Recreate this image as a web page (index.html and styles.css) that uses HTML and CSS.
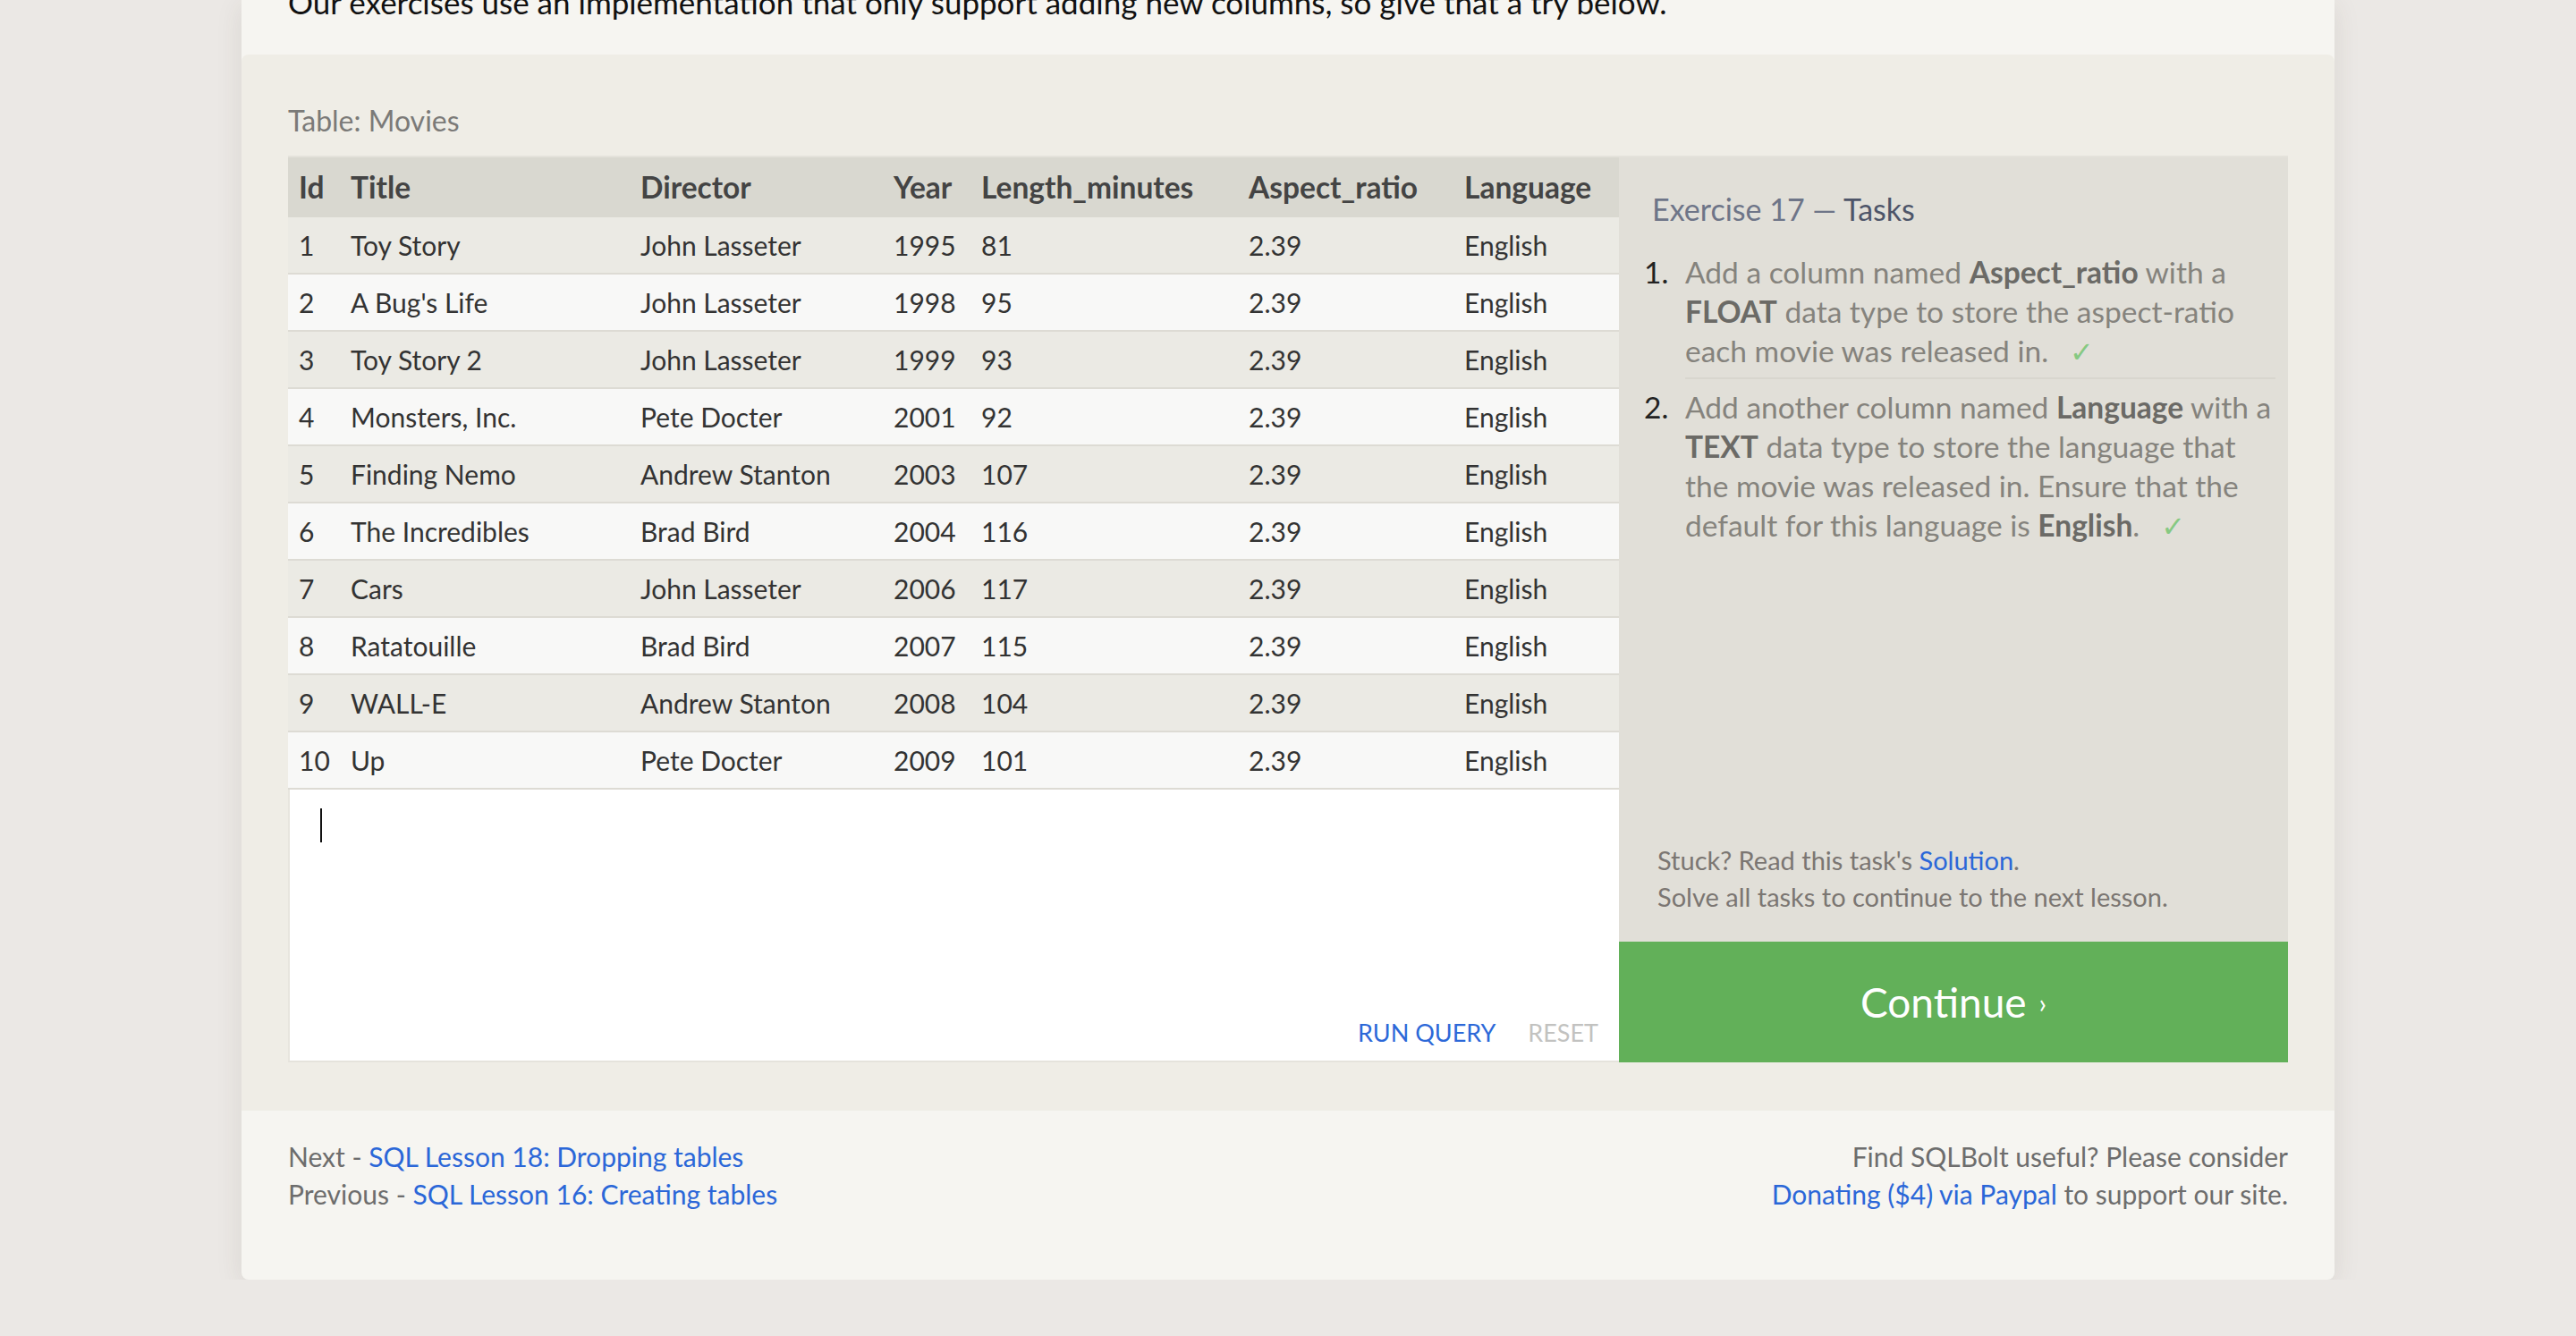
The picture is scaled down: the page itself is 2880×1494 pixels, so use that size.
FILE: index.html
```html
<!DOCTYPE html>
<html lang="en">
<head>
<meta charset="utf-8">
<title>SQLBolt - Lesson 17: Altering tables</title>
<link rel="stylesheet" href="styles.css">
</head>
<body>
<div class="card">
  <div class="intro">
    <p>Our exercises use an implementation that only support adding new columns, so give that a try below.</p>
  </div>
  <section class="exercise">
    <div class="table-label">Table: Movies</div>
    <div class="widget">
      <div class="work">
        <table class="movies">
          <colgroup>
            <col class="c-id"><col class="c-title"><col class="c-director"><col class="c-year"><col class="c-length"><col class="c-aspect"><col class="c-lang">
          </colgroup>
          <thead>
            <tr><th>Id</th><th>Title</th><th>Director</th><th>Year</th><th>Length_minutes</th><th>Aspect_ratio</th><th>Language</th></tr>
          </thead>
          <tbody>
            <tr><td>1</td><td>Toy Story</td><td>John Lasseter</td><td>1995</td><td>81</td><td>2.39</td><td>English</td></tr>
            <tr><td>2</td><td>A Bug's Life</td><td>John Lasseter</td><td>1998</td><td>95</td><td>2.39</td><td>English</td></tr>
            <tr><td>3</td><td>Toy Story 2</td><td>John Lasseter</td><td>1999</td><td>93</td><td>2.39</td><td>English</td></tr>
            <tr><td>4</td><td>Monsters, Inc.</td><td>Pete Docter</td><td>2001</td><td>92</td><td>2.39</td><td>English</td></tr>
            <tr><td>5</td><td>Finding Nemo</td><td>Andrew Stanton</td><td>2003</td><td>107</td><td>2.39</td><td>English</td></tr>
            <tr><td>6</td><td>The Incredibles</td><td>Brad Bird</td><td>2004</td><td>116</td><td>2.39</td><td>English</td></tr>
            <tr><td>7</td><td>Cars</td><td>John Lasseter</td><td>2006</td><td>117</td><td>2.39</td><td>English</td></tr>
            <tr><td>8</td><td>Ratatouille</td><td>Brad Bird</td><td>2007</td><td>115</td><td>2.39</td><td>English</td></tr>
            <tr><td>9</td><td>WALL-E</td><td>Andrew Stanton</td><td>2008</td><td>104</td><td>2.39</td><td>English</td></tr>
            <tr><td>10</td><td>Up</td><td>Pete Docter</td><td>2009</td><td>101</td><td>2.39</td><td>English</td></tr>
          </tbody>
        </table>
        <div class="editor">
          <span class="caret"></span>
          <div class="actions"><span class="run">RUN QUERY</span><span class="reset">RESET</span></div>
        </div>
      </div>
      <aside class="tasks">
        <div class="tasks-body">
          <h3 class="tasks-title">Exercise 17 — <span class="tasks-word">Tasks</span></h3>
          <ol class="task-list">
            <li><span class="num">1.</span><span class="txt">Add a column named <b>Aspect_ratio</b> with a<br><b>FLOAT</b> data type to store the aspect-ratio<br>each movie was released in.<span class="check">✓</span></span></li>
            <li><span class="num">2.</span><span class="txt">Add another column named <b>Language</b> with a<br><b>TEXT</b> data type to store the language that<br>the movie was released in. Ensure that the<br>default for this language is <b>English</b>.<span class="check">✓</span></span></li>
          </ol>
        </div>
        <div class="hint">
          <div>Stuck? Read this task's <a href="#">Solution</a>.</div>
          <div>Solve all tasks to continue to the next lesson.</div>
        </div>
        <a class="continue" href="#">Continue <span class="chev">›</span></a>
      </aside>
    </div>
  </section>
  <footer class="nav">
    <div class="nav-left">
      <div>Next - <a href="#">SQL Lesson 18: Dropping tables</a></div>
      <div>Previous - <a href="#">SQL Lesson 16: Creating tables</a></div>
    </div>
    <div class="nav-right">
      <div>Find SQLBolt useful? Please consider</div>
      <div><a href="#">Donating ($4) via Paypal</a> to support our site.</div>
    </div>
  </footer>
</div>
</body>
</html>
```

FILE: styles.css
```css
html, body {
  margin: 0;
  padding: 0;
}

body {
  background: #ebe8e5;
  font-family: Lato, "Liberation Sans", sans-serif;
  color: #333;
}

a {
  color: #2b67d8;
  text-decoration: none;
}

.card {
  width: 2340px;
  margin: 0 auto;
  background: #f6f5f1;
  border-radius: 0 0 8px 8px;
  box-shadow: 0 6px 30px rgba(70, 55, 40, 0.10);
}

.intro {
  display: flow-root;
  height: 61px;
  padding: 0 52px;
}

.intro p {
  margin: -20px 0 0;
  font-size: 35px;
  line-height: 44px;
  color: #111;
}

.exercise {
  background: #efede6;
  border-radius: 8px 8px 0 0;
  padding: 54px 52px;
}

.table-label {
  font-size: 32px;
  line-height: 40px;
  color: #7b7a78;
  margin-bottom: 19px;
}

.widget {
  display: flex;
  border-top: 2px solid #e4e2db;
}

.work {
  flex: 0 0 1488px;
  display: flex;
  flex-direction: column;
}

.movies {
  width: 100%;
  table-layout: fixed;
  border-collapse: separate;
  border-spacing: 0;
  font-size: 30px;
  color: #333;
}

.c-id { width: 58px; }
.c-title { width: 324px; }
.c-director { width: 283px; }
.c-year { width: 98px; }
.c-length { width: 299px; }
.c-aspect { width: 241px; }
.c-lang { width: 185px; }

.movies th {
  background: #d9d8d0;
  text-align: left;
  font-weight: 700;
  font-size: 33.5px;
  color: #444;
  padding: 16px 12px;
  line-height: 35px;
  white-space: nowrap;
}

.movies td {
  padding: 14px 12px;
  line-height: 34px;
  border-bottom: 2px solid #dddbd4;
  white-space: nowrap;
}

.movies tbody tr:nth-child(odd) td {
  background: #ebeae4;
}

.movies tbody tr:nth-child(even) td {
  background: #f8f8f7;
}

.editor {
  height: 305px;
  box-sizing: border-box;
  background: #fff;
  border-left: 2px solid #e7e5de;
  border-bottom: 2px solid #e5e3dc;
  display: flex;
  flex-direction: column;
  justify-content: space-between;
  align-items: flex-start;
  padding: 21px 23px 14px 34px;
}

.caret {
  display: block;
  width: 2px;
  height: 38px;
  background: #111;
}

.actions {
  align-self: stretch;
  display: flex;
  justify-content: flex-end;
  gap: 36px;
  font-size: 27px;
  line-height: 34px;
}

.run { color: #2c68d8; }
.reset { color: #c2c2c0; }

.tasks {
  flex: 1;
  background: #e1dfd8;
  display: flex;
  flex-direction: column;
}

.tasks-body {
  flex: 1;
  padding: 38px 14px 0 28px;
}

.tasks-title {
  margin: 0 0 28px 9px;
  font-size: 34px;
  line-height: 40px;
  font-weight: 400;
  color: #6e7588;
}

.tasks-word {
  color: #4e5569;
}

.task-list {
  list-style: none;
  margin: 0;
  padding: 0;
  font-size: 33.5px;
  line-height: 44px;
  color: #85837d;
}

.task-list li {
  display: flex;
}

.task-list li + li {
  padding-top: 9px;
}

.num {
  flex: none;
  width: 46px;
  color: #222;
}

.txt {
  flex: 1;
  white-space: nowrap;
}

.txt b {
  color: #6b6a66;
  font-weight: 700;
}

.task-list li:first-child .txt {
  padding-bottom: 8px;
  border-bottom: 2px solid #d8d6ce;
}

.check {
  color: #86c982;
  margin-left: 24px;
  font-family: "DejaVu Sans", sans-serif;
  font-size: 32px;
  line-height: 1;
}

.hint {
  padding: 0 14px 30px 43px;
  font-size: 29px;
  line-height: 41px;
  color: #7b7672;
}

.continue {
  height: 135px;
  background: #62b059;
  color: #fff;
  display: flex;
  align-items: center;
  justify-content: center;
  font-size: 46px;
}

.chev {
  font-size: 30px;
  margin-left: 14px;
}

.nav {
  display: flex;
  justify-content: space-between;
  padding: 30px 52px 75px;
  font-size: 30px;
  line-height: 42px;
  color: #6d6d6d;
}

.nav-right {
  text-align: right;
}
```
